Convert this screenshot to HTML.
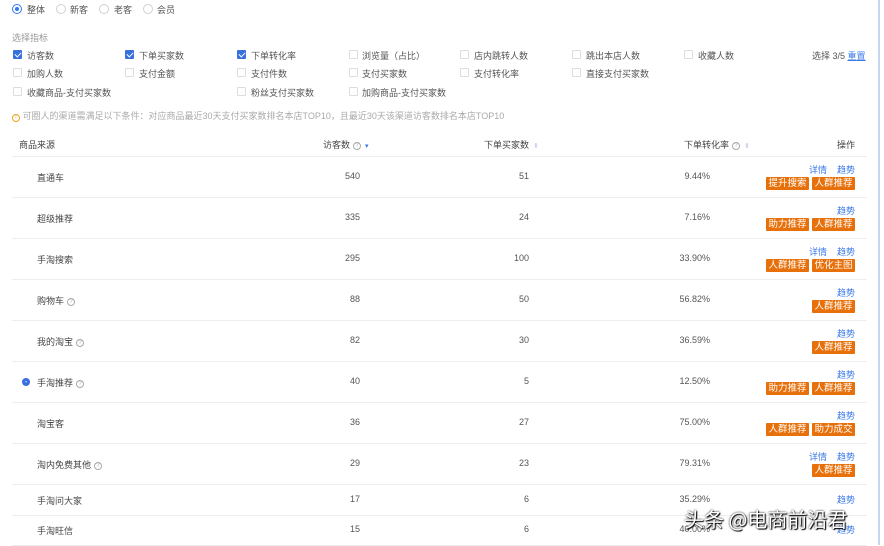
<!DOCTYPE html>
<html><head><meta charset="utf-8"><style>
*{margin:0;padding:0;box-sizing:border-box}
body{width:884px;height:545px;overflow:hidden;background:#fff;font-family:"Liberation Sans","Noto Sans CJK SC",sans-serif;font-size:9px;color:#555;position:relative}
.a{position:absolute;white-space:nowrap}
.radio{width:10px;height:10px;border:1px solid #d0d0d0;border-radius:50%;display:inline-block}
.radio.on{border-color:#3478f6}
.radio.on::after{content:"";display:block;width:4px;height:4px;background:#3478f6;border-radius:50%;margin:2px}
.cb{width:9px;height:9px;border:1px solid #ddd;border-radius:1px;background:#fff}
.cb.on{background:#3a6fe0;border-color:#3a6fe0}
.cb.on::after{content:"";position:absolute;left:2px;top:0px;width:3px;height:5px;border:solid #fff;border-width:0 1.3px 1.3px 0;transform:rotate(45deg)}
.line{position:absolute;left:12px;width:855px;height:1px;background:#eee}
.tag{position:absolute;height:13px;line-height:13px;background:#e8700a;color:#fff;font-size:9.5px;text-align:center;border-radius:1px}
.lk{color:#3a78e8;line-height:10px}
.q{display:inline-block;width:8px;height:8px;border:1px solid #aaa;border-radius:50%;font-size:6px;line-height:6px;text-align:center;color:#aaa;vertical-align:1px;margin-left:3px}
.s{display:inline-block;width:5px;margin-left:4px;color:#c8d4ea;font-size:7px}
</style></head><body>
<div class="a" style="left:12px;top:4px"><span class="radio on"></span></div><div class="a" style="left:27px;top:3px">整体</div>
<div class="a" style="left:56px;top:4px"><span class="radio"></span></div><div class="a" style="left:70px;top:3px">新客</div>
<div class="a" style="left:99px;top:4px"><span class="radio"></span></div><div class="a" style="left:114px;top:3px">老客</div>
<div class="a" style="left:143px;top:4px"><span class="radio"></span></div><div class="a" style="left:157px;top:3px">会员</div>
<div class="a" style="left:12px;top:31px;color:#999">选择指标</div>

<div class="a cb on" style="left:13px;top:50px"></div><div class="a" style="left:27px;top:49px">访客数</div>
<div class="a cb on" style="left:125px;top:50px"></div><div class="a" style="left:139px;top:49px">下单买家数</div>
<div class="a cb on" style="left:237px;top:50px"></div><div class="a" style="left:251px;top:49px">下单转化率</div>
<div class="a cb" style="left:349px;top:50px"></div><div class="a" style="left:362px;top:49px">浏览量（占比）</div>
<div class="a cb" style="left:460px;top:50px"></div><div class="a" style="left:474px;top:49px">店内跳转人数</div>
<div class="a cb" style="left:572px;top:50px"></div><div class="a" style="left:586px;top:49px">跳出本店人数</div>
<div class="a cb" style="left:684px;top:50px"></div><div class="a" style="left:698px;top:49px">收藏人数</div>
<div class="a" style="left:812px;top:49px">选择 3/5 <span class="lk" style="text-decoration:underline">重置</span></div>

<div class="a cb" style="left:13px;top:68px"></div><div class="a" style="left:27px;top:67px">加购人数</div>
<div class="a cb" style="left:125px;top:68px"></div><div class="a" style="left:139px;top:67px">支付金额</div>
<div class="a cb" style="left:237px;top:68px"></div><div class="a" style="left:251px;top:67px">支付件数</div>
<div class="a cb" style="left:349px;top:68px"></div><div class="a" style="left:362px;top:67px">支付买家数</div>
<div class="a cb" style="left:460px;top:68px"></div><div class="a" style="left:474px;top:67px">支付转化率</div>
<div class="a cb" style="left:572px;top:68px"></div><div class="a" style="left:586px;top:67px">直接支付买家数</div>

<div class="a cb" style="left:13px;top:87px"></div><div class="a" style="left:27px;top:86px">收藏商品-支付买家数</div>
<div class="a cb" style="left:237px;top:87px"></div><div class="a" style="left:251px;top:86px">粉丝支付买家数</div>
<div class="a cb" style="left:349px;top:87px"></div><div class="a" style="left:362px;top:86px">加购商品-支付买家数</div>

<div class="a" style="left:12px;top:109px;color:#aaa"><span style="display:inline-block;width:8px;height:8px;border:1px solid #f0a020;border-radius:50%;color:#f0a020;font-size:6px;line-height:6px;text-align:center;vertical-align:0">!</span> 可圈人的渠道需满足以下条件：对应商品最近30天支付买家数排名本店TOP10，且最近30天该渠道访客数排名本店TOP10</div>

<div class="a" style="left:19px;top:138px;color:#444">商品来源</div>
<div class="a" style="left:323px;top:138px;color:#444">访客数<span class="q">?</span><span class="s" style="color:#3a78e8">▾</span></div>
<div class="a" style="left:484px;top:138px;color:#444">下单买家数<span class="s">⬍</span></div>
<div class="a" style="left:684px;top:138px;color:#444">下单转化率<span class="q">?</span><span class="s">⬍</span></div>
<div class="a" style="left:837px;top:138px;color:#444">操作</div>
<div class="line" style="top:156px"></div>

<div id="rows"></div>
<script>
var R=[
["直通车","540","51","9.44%",1,["提升搜索","人群推荐"],0,0],
["超级推荐","335","24","7.16%",0,["助力推荐","人群推荐"],0,0],
["手淘搜索","295","100","33.90%",1,["人群推荐","优化主图"],0,0],
["购物车","88","50","56.82%",0,["人群推荐"],1,0],
["我的淘宝","82","30","36.59%",0,["人群推荐"],1,0],
["手淘推荐","40","5","12.50%",0,["助力推荐","人群推荐"],1,1],
["淘宝客","36","27","75.00%",0,["人群推荐","助力成交"],0,0],
["淘内免费其他","29","23","79.31%",1,["人群推荐"],1,0],
["手淘问大家","17","6","35.29%",0,[],0,0],
["手淘旺信","15","6","40.00%",0,[],0,0]];
var h="",y=156;
R.forEach(function(r,i){
var H=i<8?41:(i==8?31:30);var c=y+H/2;
if(r[7])h+='<div class="a" style="left:22px;top:'+(c-4)+'px;width:8px;height:8px;border-radius:50%;background:#3a6fe0;color:#fff;font-size:8px;line-height:7px;text-align:center">-</div>';
h+='<div class="a" style="left:37px;top:'+(c-6)+'px;color:#444">'+r[0]+(r[6]?'<span class="q">?</span>':'')+'</div>';
h+='<div class="a" style="right:524px;top:'+(c-6)+'px">'+r[1]+'</div>';
h+='<div class="a" style="right:355px;top:'+(c-6)+'px">'+r[2]+'</div>';
h+='<div class="a" style="right:174px;top:'+(c-6)+'px">'+r[3]+'</div>';
var ly=r[5].length?c-12:c-5;
h+='<div class="a lk" style="right:29px;top:'+ly+'px">'+(r[4]?'详情&nbsp;&nbsp;&nbsp;&nbsp;':'')+'趋势</div>';
var x=855;for(var k=r[5].length-1;k>=0;k--){h+='<div class="tag" style="left:'+(x-43)+'px;top:'+(c)+'px;width:43px">'+r[5][k]+'</div>';x-=46;}
y+=H;h+='<div class="line" style="top:'+y+'px"></div>';});
document.getElementById("rows").innerHTML=h;
</script>
<div class="a" style="left:878px;top:0;width:2px;height:545px;background:#c5d8ef"></div>
<div class="a" style="left:684px;top:504px;font-size:20px;color:#fff;text-shadow:0 0 2px #000,1px 1px 1px #000;font-family:'Noto Sans CJK SC',sans-serif">头条 @电商前沿君</div>
</body></html>
